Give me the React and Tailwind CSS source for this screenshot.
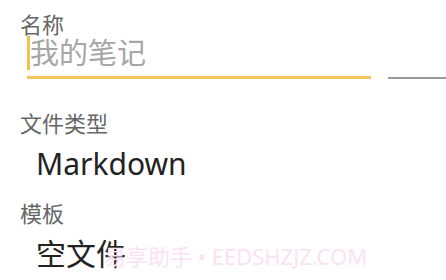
export default function App() {
  const label = "text-[22px] leading-[22px] text-[#666666]";
  const value = "text-[#222222]";

  return (
    <div
      className="relative w-[446px] h-[280px] overflow-hidden bg-white"
      style={{ fontFamily: '"Noto Sans", Roboto, "Noto Sans CJK SC", sans-serif' }}
    >
      <div className="flex flex-col pl-[20px] pt-[13px]">
        <div className={label}>名称</div>

        <div className="mt-[1px] flex items-center pl-[7px]">
          <span className="w-[3px] h-[34px] bg-[#f0c24e]" />
          <span className="text-[29px] leading-[34px] text-[#a6a6a6]">我的笔记</span>
        </div>

        <div className="mt-[6px] flex items-center">
          <div className="ml-[7px] w-[356px] h-[3px] bg-[#f2c65a]" />
          <div className="ml-[17px] w-[60px] h-[2px] bg-[#9a9a9a]" />
        </div>

        <div className={`${label} mt-[33px]`}>文件类型</div>
        <div className={`${value} mt-[13px] ml-[16px] text-[30px] leading-[34px]`}>Markdown</div>

        <div className={`${label} mt-[21px]`}>模板</div>
        <div className={`${value} mt-[13px] ml-[16px] text-[30px] leading-[34px]`}>空文件</div>
      </div>

      <div className="absolute left-[104px] top-[244px] text-[22px] leading-[24px] text-[#fbe2f2] whitespace-nowrap">
        易享助手 • EEDSHZJZ.COM
      </div>
    </div>
  );
}
